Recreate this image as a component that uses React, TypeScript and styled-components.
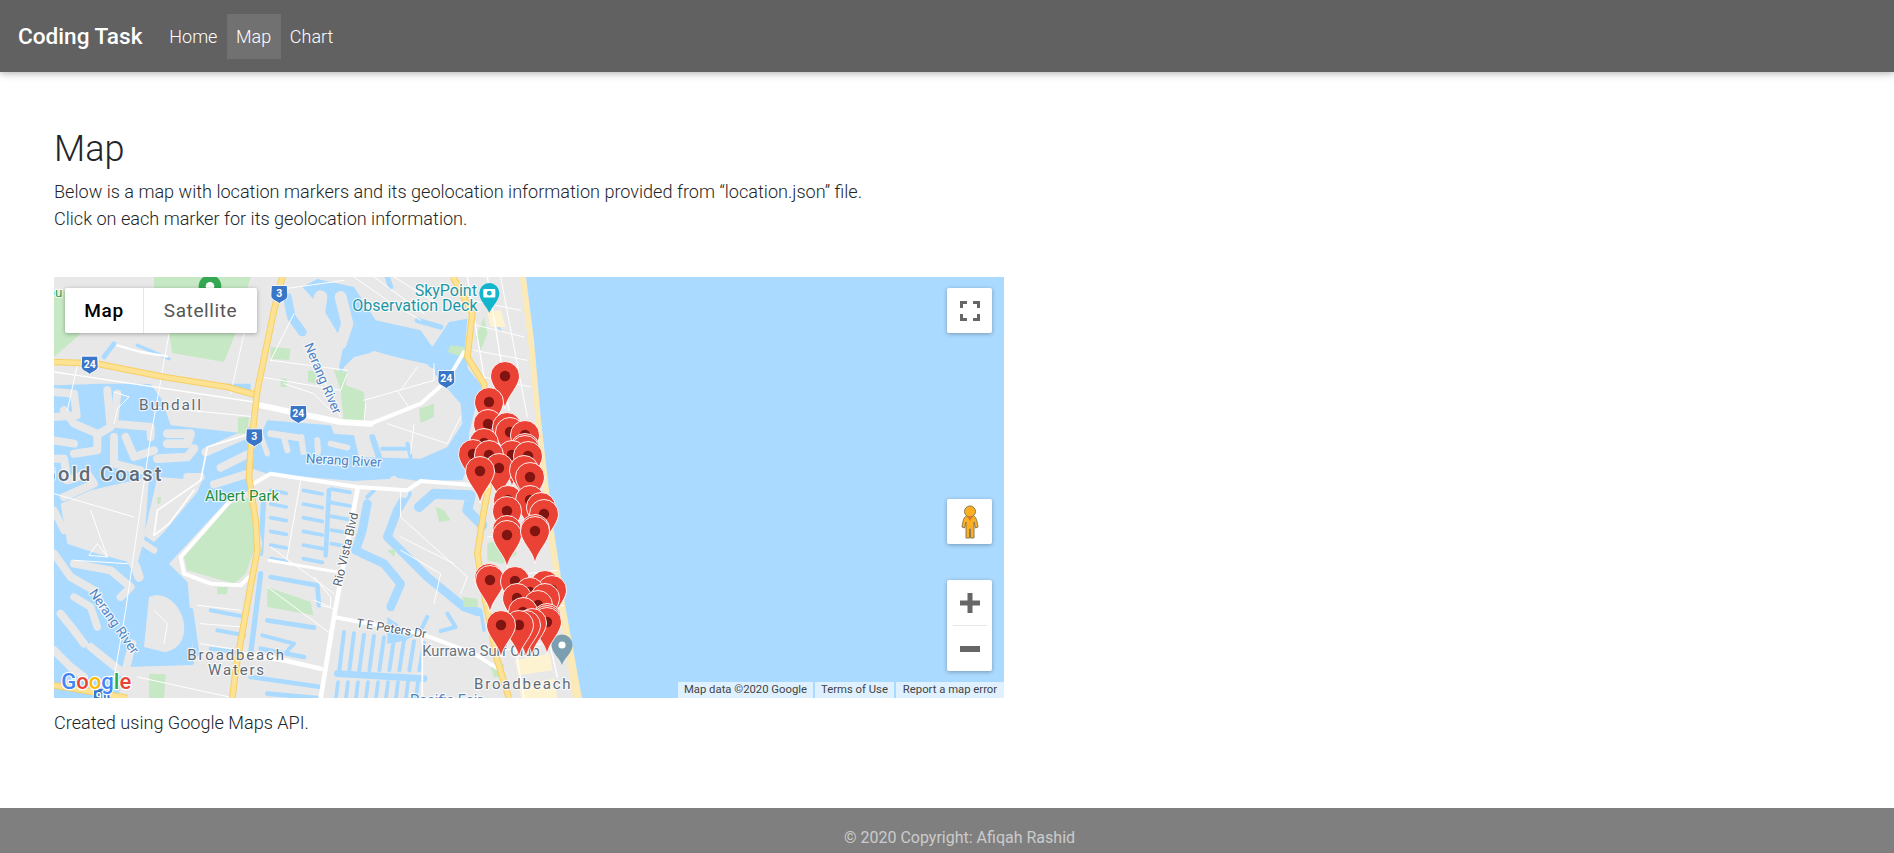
import React from "react";
import styled, { createGlobalStyle } from "styled-components";

const Global = createGlobalStyle`
  html, body { margin: 0; padding: 0; background: #fff; overflow: hidden; height: 853px; }
  body { font-family: Roboto, "Liberation Sans", sans-serif; color: #212529; }
  * { box-sizing: border-box; }
`;
const Page = styled.div`height: 853px; display: flex; flex-direction: column; overflow: hidden;`;
const NavBar = styled.nav`
  height: 72px; flex: none; background: #616161; display: flex; align-items: center; padding: 0 18px;
  box-shadow: 0 2px 5px rgba(0,0,0,.16), 0 2px 10px rgba(0,0,0,.12); position: relative; z-index: 2;
`;
const Brand = styled.a`font-size: 22.6px; font-weight: 500; color: #fff; width: 142px;`;
const NavLinks = styled.div`display: flex; height: 45px;`;
const NavLink = styled.a<{ $active?: boolean }>`
  display: flex; align-items: center; padding: 0 9.3px; font-size: 18px; font-weight: 300; color: #fff;
  background: ${p => (p.$active ? "rgba(255,255,255,.1)" : "transparent")};
`;
const Main = styled.main`flex: 1; padding: 54px 54px 0;`;
const Title = styled.h1`margin: 0 0 7px; font-size: 36px; font-weight: 300; line-height: 44px;`;
const Lead = styled.p`margin: 0; font-size: 18.08px; font-weight: 300; line-height: 27px;`;
const Intro = styled.div`height: 151px; padding-top: 1px;`;
const MapBox = styled.div`
  position: relative; width: 950px; height: 421px; overflow: hidden; background: #e8e8e8;
  font-family: Roboto, sans-serif;
`;
const MapCanvas = styled.svg`display: block; width: 950px; height: 421px;`;
const MapType = styled.div`
  position: absolute; left: 11px; top: 11px; display: flex; height: 45px; background: #fff; border-radius: 2px;
  box-shadow: 0 1px 4px rgba(0,0,0,.3);
`;
const TypeButton = styled.div<{ $active?: boolean; $w: number }>`
  width: ${p => p.$w}px; display: flex; align-items: center; justify-content: center; font-size: 19px; letter-spacing: .6px;
  font-weight: ${p => (p.$active ? 500 : 400)}; color: ${p => (p.$active ? "#000" : "#565656")};
  & + & { border-left: 1px solid #e6e6e6; }
`;
const Control = styled.div<{ $top: number; $h?: number }>`
  position: absolute; left: 893px; top: ${p => p.$top}px; width: 45px; height: ${p => p.$h ?? 45}px; background: #fff; border-radius: 2px;
  box-shadow: 0 1px 4px rgba(0,0,0,.3); display: flex; flex-direction: column; align-items: center; justify-content: center;
`;
const ZoomPart = styled.div`height: 45px; width: 100%; display: flex; align-items: center; justify-content: center;`;
const ZoomRule = styled.div`height: 1px; width: 34px; background: #e6e6e6; flex: none;`;
const Attribution = styled.div`
  position: absolute; right: 0; bottom: 0; height: 16px; display: flex; gap: 2px; font-size: 11.3px; color: #444;
`;
const AttrItem = styled.span<{ $w: number }>`
  width: ${p => p.$w}px; background: rgba(255,255,255,.62); display: flex; align-items: center; justify-content: center; line-height: 16px; white-space: nowrap;
`;
const Caption = styled.p`margin: 11px 0 0; font-size: 18.08px; font-weight: 300; line-height: 27px;`;
const Footer = styled.footer`
  height: 45px; flex: none; background: #7f7f7f; color: rgba(255,255,255,.6); font-size: 16px; font-weight: 400;
  text-align: center; padding: 16px 0 0 25px; line-height: 27px;
`;

const LAND = "#e8e8e8", WATER = "#aadaff", PARK = "#c6e8c4", SAND = "#fbe9b7", ROAD = "#fde293", ROAD2 = "#f6cf65";
type S = [number, string];

/* All map geometry is in 3x map coordinates (viewBox 2850 x 1263). */
const waterPolys = [
  "M1416 0L1440 189L1461 429L1497 744L1536 999L1584 1263L2850 1263L2850 0Z",
  // Broadwater and Nerang River
  "M745 30L790 6L900 30L965 130L1100 160L1135 210L1185 135L1240 125L1232 215L1242 275L1290 335L1262 400L1245 470L1245 560L1225 610L1090 612L1040 604L900 612L640 590L595 575L600 520L640 430L830 445L840 470L900 475L915 540L1100 545L1180 510L1225 440L1220 380L1150 300L1120 262L960 225L900 240L870 270L860 300L855 270L870 200L810 100Z",
  // western canal basin
  "M0 320L590 320L590 620L570 700L590 700L400 900L420 1160L300 1263L0 1263Z",
  // blocks that sit lower down
  "M1000 1020L1030 1040L1060 1090L1000 1100Z",
];
const waterStrokes: S[] = [
  [26, "M700 60L712 120L745 165"],
  [16, "M1000 0L1010 30"],
  [16, "M1090 130L1160 150"],
  [26, "M940 680L925 760L905 820L990 860L1040 920L1010 990"],
  [26, "M1060 650L1030 700L1000 780L1120 900L1230 990L1272 1005"],
  [30, "M1095 690L1140 650L1250 655L1240 700L1285 745"],
  [16, "M628 680L620 830"],
  [14, "M825 640L815 835"],
  [14, "M650 900L790 925L795 985"],
  [16, "M620 890L590 1130"],
  [14, "M640 1030L780 1052"],
  [12, "M625 1075L720 1100L700 1122"],
  [14, "M620 1115L750 1140"],
  [12, "M1120 1020L1100 1060L1060 1080"],
  [12, "M1180 1010L1205 1050L1160 1062"],
  [10, "M1280 1000L1290 1060"],
  [20, "M850 1190L1110 1205"],
  [14, "M590 1200L800 1230"],
  [14, "M640 1250L790 1263"],
  [12, "M960 640L940 660"],
  [6, "M1310 120L1340 160"],
  [14, "M180 200L150 240"],
  [10, "M250 205L345 245"],
];
for (let i = 0; i < 6; i++) {
  const y = 640 + i * 41;
  waterStrokes.push([11, `M650 ${y}L697 ${y + 9}`], [11, `M748 ${y}L805 ${y + 11}`]);
  if (i < 5) waterStrokes.push([11, `M832 ${y - 4}L888 ${y + 6}`]);
}
for (let i = 0; i < 9; i++) {
  const x = 862 + i * 30;
  waterStrokes.push([12, `M${x + 8} ${1065 + i * 4}L${x - 6} 1180`], [11, `M${x - 10} 1215L${x - 16} 1263`]);
}
const landPolys = [
  "M0 262L610 345L612 430L560 468L420 452L350 445L322 365L290 322L200 312L100 322L0 325Z",
  "M110 640L285 600L272 780L250 862L130 830L40 800L20 680Z",
  "M310 600L445 610L430 645L330 765L300 795L270 775Z",
  "M530 660L590 640L625 800L600 930L400 915L345 860Z",
  "M285 960C330 940 380 980 390 1040C395 1090 370 1120 330 1125L270 1110Z",
  "M220 1170L540 1160L545 1263L190 1263Z",
  "M430 960L590 950L565 1160L450 1160Z",
];
const fingers: S[] = [
  [24, "M0 345L60 350L68 415L0 420"],
  [24, "M160 340L170 450L135 470"],
  [24, "M190 350L180 440L290 450L290 480"],
  [24, "M215 480L240 540L300 520"],
  [26, "M340 470L410 470L400 500L340 500"],
  [26, "M310 545L400 540L420 515"],
  [24, "M30 400L60 440L130 470L130 520L60 530"],
  [24, "M0 490L60 500"],
  [24, "M180 480L180 560L260 580"],
  [24, "M0 545L30 545L40 610L100 590L120 620L30 660"],
  [26, "M455 525L570 475"],
  [24, "M500 572L580 532"],
  [24, "M480 622L575 592"],
  [24, "M400 600L440 600"],
  [22, "M0 700L30 760"],
  [24, "M60 860L170 880L230 930L200 960"],
  [24, "M0 830L50 900L120 940L150 1000"],
  [22, "M60 960L110 990L130 1050"],
  [24, "M20 1010L60 1060L90 1100"],
  [24, "M0 1120L50 1170L90 1200"],
  [24, "M110 1110L160 1150L210 1190"],
  [24, "M235 1100L215 1180"],
  [28, "M220 830L245 870L255 900"],
  [20, "M240 780L300 820"],
  [26, "M1050 650L1020 610"],
  [20, "M650 470L730 482"],
  [18, "M690 480L700 520"],
  [18, "M742 480L748 525"],
  [18, "M790 490L792 525"],
  [18, "M830 500L880 512"],
  [16, "M620 475L640 530"],
  [18, "M1000 640L1020 620"],
  [14, "M995 505L1050 500"],
  [40, "M800 60L790 130L830 210"],
  [36, "M860 60L880 140L860 200"],
  [30, "M910 260L905 275"],
  [26, "M960 235L1130 285"],
  [12, "M780 80L770 140"],
];
const riverBits: S[] = [
  [18, "M955 480L975 540"],
  [12, "M985 515L1055 515"],
  [12, "M1060 500L1070 540"],
  [12, "M470 1000L575 1020"],
  [12, "M490 1060L570 1075"],
  [12, "M470 1115L545 1125"],
  [16, "M410 1000L428 1130L390 1155"],
];
const parks = [
  "M300 0L590 0L580 33L300 33Z",
  "M345 168L545 168L510 255L355 228Z",
  "M0 40L85 40L80 170L0 240Z",
  "M530 680L590 660L605 750L600 820L575 890L540 920L400 880L390 840Z",
  "M650 210L710 215L705 250L650 245Z",
  "M762 280L792 285L785 320L762 315Z",
  "M680 305L698 305L698 330L680 330Z",
  "M840 280L880 285L875 325L930 345L935 440L870 440L860 340Z",
  "M1095 395L1140 380L1140 420L1100 438Z",
  "M552 422L585 420L580 468L552 470Z",
  "M490 930L522 930L518 952L490 952Z",
  "M640 930L770 975L778 1015L640 990Z",
  "M285 1190L335 1192L330 1263L285 1263Z",
  "M1190 205L1235 210L1225 240L1180 225Z",
  "M310 660L322 660L318 680L310 680Z",
  "M1000 820L1025 815L1020 840Z",
  "M1145 690L1170 700L1190 730L1155 735Z",
  "M1225 960L1270 965L1272 990L1230 990Z",
  "M1265 180L1290 120L1300 170L1280 220Z",
  "M1300 800L1345 780L1390 830L1345 860L1300 850Z",
  "M1390 1010L1430 990L1425 1050L1395 1060Z",
  "M1310 1170L1350 1160L1345 1200L1320 1200Z",
];
const white: S[] = [
  [18, "M620 385L735 410L860 435L950 440"],
  [12, "M950 440L1100 380L1180 310L1230 225"],
  [12, "M590 625L650 590L910 630L1060 640L1100 612L1260 625"],
  [14, "M910 640L880 800L840 1020L800 1263"],
  [12, "M840 1020L1100 1070L1260 1130L1340 1180"],
  [14, "M560 1130L690 1150L800 1175"],
  [12, "M530 670L380 840L390 890L470 920L560 925L585 900"],
  [9, "M645 850L850 885"],
  [5, "M1105 1070L1105 1263"],
  [7, "M190 205L260 225L340 238"],
  [5, "M590 470L460 510L440 610L310 700L300 775L345 740L420 640"],
  [4, "M0 285L70 295L600 375"],
  [3, "M345 170L290 480L215 1000L170 1263"],
  [3, "M570 170L530 350"],
  [3, "M70 265L40 400"],
  [3, "M300 390L610 420"],
  [3, "M180 345L225 360L190 395L180 440"],
  [3, "M0 650L240 720"],
  [3, "M110 700L160 840L105 835L130 800L160 840"],
  [3, "M60 850L220 860"],
  [3, "M740 610L698 850"],
  [3, "M650 250L880 280"],
  [3, "M620 300L860 340L880 290"],
  [3, "M660 40L870 10"],
  [3, "M720 110L650 250"],
  [3, "M690 320L780 350L830 400"],
  [3, "M800 290L860 420"],
  [3, "M900 0L1000 70L1100 130"],
  [3, "M960 0L1110 110"],
  [3, "M1020 0L1150 80"],
  [3, "M930 370L1140 310L1140 260"],
  [3, "M1030 340L1070 400"],
  [3, "M1090 270L1040 340"],
  [3, "M935 380L930 440"],
  [3, "M1000 440L1180 500L1220 420"],
  [3, "M1080 440L1070 530"],
  [3, "M1040 640L1040 720L1240 900L1220 950"],
  [3, "M1040 780L1200 860"],
  [3, "M1040 820L1160 890L1140 980"],
  [3, "M650 810L840 950"],
  [3, "M780 900L830 960L830 990L780 970"],
  [3, "M800 985L840 995"],
  [3, "M640 930L830 1070"],
  [3, "M440 1100L560 1120"],
  [3, "M430 985L560 1000"],
  [3, "M440 1040L565 1050"],
  [3, "M250 1200L540 1263"],
  [3, "M300 1000L340 1040L330 1100"],
  [4, "M1240 0L1310 420L1350 640"],
  [4, "M1300 0L1365 400"],
  [3, "M1340 0L1420 420"],
  [3, "M1250 70L1400 100"],
  [3, "M1250 140L1410 180"],
  [3, "M1260 220L1420 250"],
  [3, "M1290 300L1430 330"],
  [3, "M1330 600L1440 580"],
  [3, "M1330 700L1470 680"],
  [3, "M1300 780L1480 750"],
  [3, "M1320 900L1510 880"],
  [3, "M1345 1010L1530 985"],
  [3, "M1350 1120L1520 1090"],
  [4, "M1380 1090L1410 1263"],
  [4, "M1480 1070L1510 1200"],
];
const sand = "M1398 0L1416 0L1440 189L1461 429L1497 744L1536 999L1584 1263L1557 1263L1515 999L1478 744L1445 429L1422 189Z";
const cityBlock = "M1383 1150L1488 1130L1495 1180L1392 1195ZM1395 1225L1500 1205L1510 1263L1402 1263ZM1300 105L1340 100L1355 150L1310 150Z";
type Sh = [number, number, string];
const shields: Sh[] = [[676, 48, "3"], [107, 260, "24"], [1177, 303, "24"], [733, 408, "24"], [601, 478, "3"], [143, 1256, "90"]];
const pins: [number, number][] = [
  [505, 376], [489, 402], [488, 424], [507, 427], [510, 432], [525, 435], [484, 443], [525, 448], [525, 450], [512, 455],
  [528, 456], [473, 454], [489, 455], [499, 468], [524, 470], [530, 477], [480, 471], [508, 500], [530, 500], [541, 507],
  [544, 514], [507, 511], [507, 530], [535, 529], [507, 535], [535, 531],
  [489, 578], [490, 580], [515, 581], [545, 585], [552, 590], [530, 592], [517, 598], [545, 598], [538, 605], [523, 612],
  [547, 618], [547, 620], [547, 622], [532, 623], [526, 625], [519, 625], [501, 625],
];
const Pin = ({ x, y }: { x: number; y: number }) => (
  <g transform={`translate(${(x - 54) * 3} ${(y - 277) * 3}) scale(3)`}>
    <path d="M0 32.5C-1.5 24-6 19-10.5 11.5C-13.5 6.5-14.5 3-14.5 0A14.5 14.5 0 0 1 14.5 0C14.5 3 13.5 6.5 10.5 11.5C6 19 1.5 24 0 32.5Z" fill="#ea4335" stroke="#fff" strokeWidth=".9" />
    <circle r="5.2" fill="#7f1410" />
  </g>
);
const Label = styled.text<{ $c?: string; $s?: number; $w?: number; $ls?: number }>`
  font-family: Roboto, sans-serif; font-size: ${p => p.$s ?? 44}px; font-weight: ${p => p.$w ?? 400};
  letter-spacing: ${p => p.$ls ?? 0}px; fill: ${p => p.$c ?? "#5f6b76"};
  stroke: rgba(255,255,255,.75); stroke-width: 7px; paint-order: stroke; stroke-linejoin: round;
`;
const Poly = ({ items, color }: { items: S[]; color: string }) => (
  <>{items.map(([w, d], i) => <path key={i} d={d} fill="none" stroke={color} strokeWidth={w} strokeLinecap="round" strokeLinejoin="round" />)}</>
);
const Highway = ({ d }: { d: string }) => (
  <>
    <path d={d} fill="none" stroke={ROAD2} strokeWidth="20" strokeLinejoin="round" />
    <path d={d} fill="none" stroke={ROAD} strokeWidth="14" strokeLinejoin="round" />
  </>
);

const MapDrawing = () => (
  <MapCanvas viewBox="0 0 2850 1263">
    <rect width="2850" height="1263" fill={LAND} />
    <path d={sand} fill={SAND} />
    {waterPolys.map((d, i) => <path key={i} d={d} fill={WATER} />)}
    <Poly items={waterStrokes} color={WATER} />
    {landPolys.map((d, i) => <path key={i} d={d} fill={LAND} />)}
    <Poly items={fingers} color={LAND} />
    <Poly items={riverBits} color={WATER} />
    {parks.map((d, i) => <path key={i} d={d} fill={PARK} />)}
    <path d={cityBlock} fill="#fdf3d0" />
    <Poly items={white} color="#fff" />
    <Highway d="M0 255L130 260L330 300L520 330L610 355" />
    <Highway d="M685 0L660 100L610 340L590 520L585 600L605 730L610 820L580 980L545 1180L535 1263" />
    <Highway d="M1197 0L1255 110L1240 240L1290 320L1310 600L1290 700L1270 830L1290 950L1330 1150L1365 1263" />
    <Highway d="M0 1225L60 1235L220 1263" />
    {shields.map(([x, y, t]) => (
      <g key={x + t} transform={`translate(${x} ${y}) scale(3)`}>
        <path d="M-8 -7.5H8L8.5 3C8 7 3 8 0 10.5C-3 8 -8 7 -8.5 3Z" fill="#3a76c8" stroke="#fff" strokeWidth=".9" />
        <text textAnchor="middle" y="4" fontFamily="Roboto, sans-serif" fontSize="10.5" fontWeight="700" fill="#fff">{t}</text>
      </g>
    ))}
    <circle cx="468" cy="28" r="34" fill="#34a853" /><circle cx="468" cy="28" r="13" fill="#fff" />
    <Label x="-20" y="60" $c="#2e9e57" $s={40}>ou</Label>
    <Label x="-36" y="612" $s={60} $w={500} $ls={7}>Gold Coast</Label>
    <Label x="255" y="398" $s={46} $ls={5.5}>Bundall</Label>
    <Label x="755" y="558" $c="#4f84c4" $s={40} transform="rotate(3 755 558)">Nerang River</Label>
    <Label x="453" y="672" $c="#1e8e3e" $s={45}>Albert Park</Label>
    <Label x="1082" y="57" $c="#1d96a6" $s={48}>SkyPoint</Label>
    <Label x="895" y="103" $c="#1d96a6" $s={48}>Observation Deck</Label>
    <Label x="862" y="930" $c="#57606a" $s={37} transform="rotate(-77 862 930)">Rio Vista Blvd</Label>
    <Label x="905" y="1050" $c="#57606a" $s={37} transform="rotate(9 905 1050)">T E Peters Dr</Label>
    <Label x="750" y="205" $c="#4f84c4" $s={40} transform="rotate(67 750 205)">Nerang River</Label>
    <Label x="104" y="948" $c="#4f84c4" $s={40} transform="rotate(55 104 948)">Nerang River</Label>
    <Label x="400" y="1148" $s={45} $ls={5.5}>Broadbeach</Label>
    <Label x="462" y="1194" $s={45} $ls={5.5}>Waters</Label>
    <Label x="1105" y="1137" $c="#66737f" $s={44}>Kurrawa Surf Club</Label>
    <Label x="1260" y="1236" $s={45} $ls={5.5}>Broadbeach</Label>
    <Label x="1068" y="1285" $c="#4f84c4" $s={44}>Pacific Fair</Label>
    <g transform="translate(1306 48) scale(3)">
      <path d="M0 20C-2 14-10 8-10 0A10 10 0 0 1 10 0C10 8 2 14 0 20Z" fill="#12b5cb" />
      <rect x="-6" y="-4" width="12" height="8.5" rx="1" fill="#fff" /><circle r="2.4" cy=".2" fill="#12b5cb" />
    </g>
    <g transform="translate(1524 1107) scale(3)">
      <path d="M0 19C-2 12-10.5 7-10.5 -1A10.5 10.5 0 0 1 10.5 -1C10.5 7 2 12 0 19Z" fill="#7b9eb0" />
      <circle r="3.6" cy="-1" fill="#fff" />
    </g>
    {pins.map(([x, y], i) => <Pin key={i} x={x} y={y} />)}
    <text x="22" y="1236" fontFamily="Roboto, sans-serif" fontSize="66" fontWeight="500" stroke="#fff" strokeWidth="7" paintOrder="stroke">
      <tspan fill="#4285f4">G</tspan><tspan fill="#ea4335">o</tspan><tspan fill="#fbbc05">o</tspan><tspan fill="#4285f4">g</tspan><tspan fill="#34a853">l</tspan><tspan fill="#ea4335">e</tspan>
    </text>
  </MapCanvas>
);

export default function App() {
  return (
    <Page>
      <Global />
      <NavBar>
        <Brand>Coding Task</Brand>
        <NavLinks>
          <NavLink>Home</NavLink>
          <NavLink $active>Map</NavLink>
          <NavLink>Chart</NavLink>
        </NavLinks>
      </NavBar>
      <Main>
        <Intro>
          <Title>Map</Title>
          <Lead>Below is a map with location markers and its geolocation information provided from “location.json” file.</Lead>
          <Lead>Click on each marker for its geolocation information.</Lead>
        </Intro>
        <MapBox>
          <MapDrawing />
          <MapType>
            <TypeButton $active $w={78}>Map</TypeButton>
            <TypeButton $w={114}>Satellite</TypeButton>
          </MapType>
          <Control $top={11}>
            <svg width="20" height="20" viewBox="0 0 20 20" fill="none" stroke="#666" strokeWidth="3"><path d="M1.5 7V1.5H7M13 1.5H18.5V7M18.5 13V18.5H13M7 18.5H1.5V13" /></svg>
          </Control>
          <Control $top={222}>
            <svg width="22" height="34" viewBox="0 0 22 34" stroke="#8a7a55" strokeWidth="1">
              <path d="M7.5 11C5 12 4 15 3 22L5.5 23L7 17V33H10.5V24H11.5V33H15V17L16.5 23L19 22C18 15 17 12 14.5 11Z" fill="#fbb023" />
              <circle cx="11" cy="6.5" r="5.5" fill="#fbb023" />
              <path d="M8 11.5H14L11 16Z" fill="#e0792d" stroke="none" />
            </svg>
          </Control>
          <Control $top={303} $h={91}>
            <ZoomPart>
              <svg width="20" height="20" viewBox="0 0 20 20" fill="#666"><path d="M7.5 0H12.5V7.5H20V12.5H12.5V20H7.5V12.5H0V7.5H7.5Z" /></svg>
            </ZoomPart>
            <ZoomRule />
            <ZoomPart>
              <svg width="20" height="6" viewBox="0 0 20 6" fill="#666"><rect width="20" height="6" /></svg>
            </ZoomPart>
          </Control>
          <Attribution>
            <AttrItem $w={135}>Map data ©2020 Google</AttrItem>
            <AttrItem $w={79}>Terms of Use</AttrItem>
            <AttrItem $w={108}>Report a map error</AttrItem>
          </Attribution>
        </MapBox>
        <Caption>Created using Google Maps API.</Caption>
      </Main>
      <Footer>© 2020 Copyright: Afiqah Rashid</Footer>
    </Page>
  );
}
